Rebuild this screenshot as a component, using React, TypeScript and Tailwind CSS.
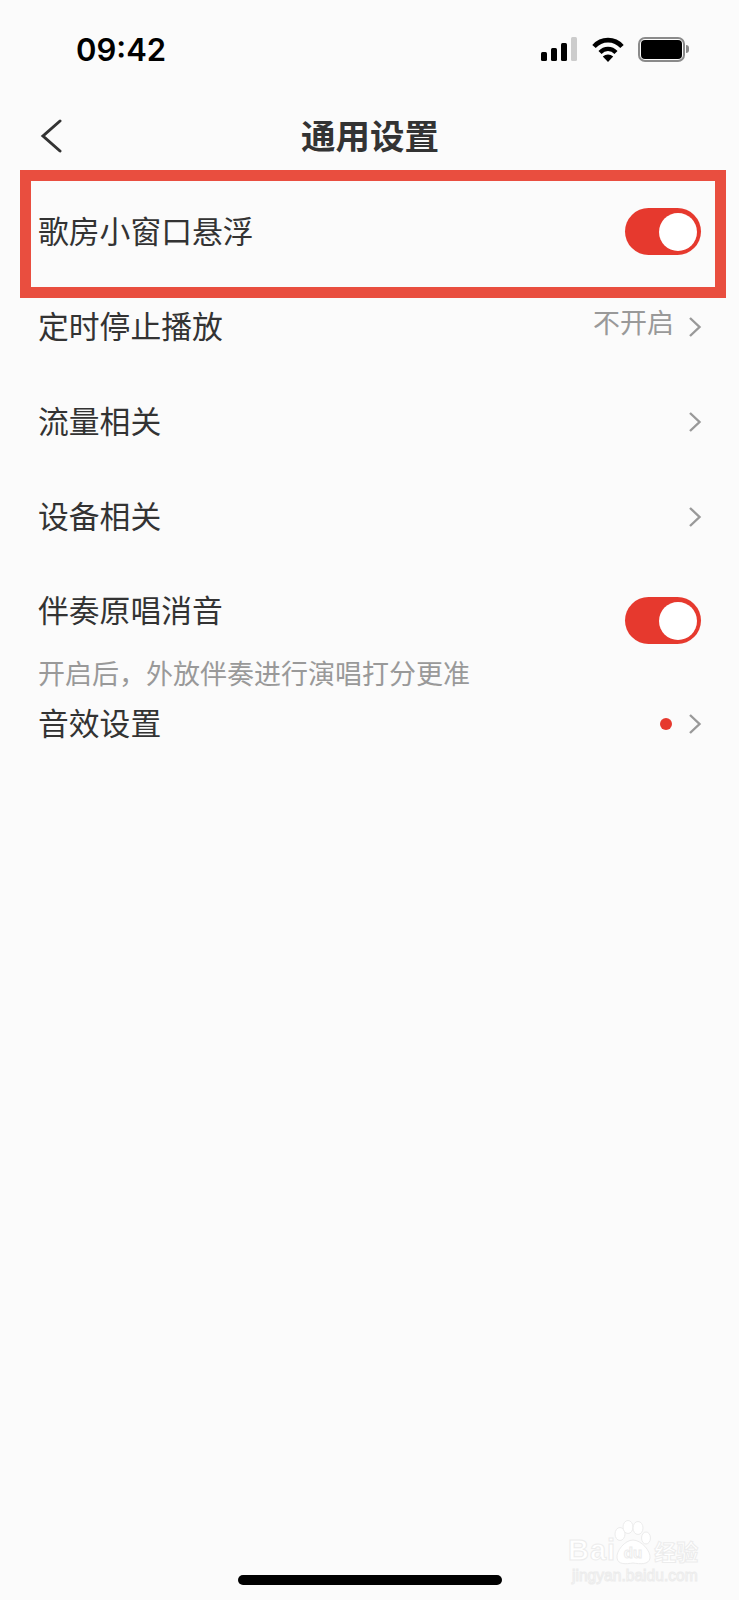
const cjk = "font-['Noto_Sans_CJK_SC','Noto_Sans',sans-serif]";
const labelText = "text-[30.800px] leading-[46px] text-[#333333]";

function Chevron() {
  return (
    <svg width="14" height="22" viewBox="0 0 14 22" fill="none" className="shrink-0">
      <path d="M2 2l9.5 9L2 20" stroke="#999999" strokeWidth="2.4" />
    </svg>
  );
}

function Toggle() {
  return (
    <div className="w-[76px] h-[47px] rounded-full bg-[#e6392e] flex items-center justify-end pr-1">
      <div className="w-[38px] h-[38px] rounded-full bg-white" />
    </div>
  );
}

function StatusIcons() {
  return (
    <div className="flex items-center">
      <svg width="37" height="25" viewBox="0 0 37 25" className="mr-[14px]">
        <rect x="0" y="15" width="6" height="9" rx="1.5" fill="#000" />
        <rect x="10" y="11" width="6" height="13" rx="1.5" fill="#000" />
        <rect x="20" y="6" width="6" height="18" rx="1.5" fill="#000" />
        <rect x="30" y="0" width="6" height="24" rx="1.5" fill="#cccccc" />
      </svg>
      <svg width="32" height="25" viewBox="0 0 32 25" fill="none" className="mr-[14px]">
        <path d="M2 9.5C9.5 1 22.500 1 30 9.500" stroke="#000" strokeWidth="4.600" />
        <path d="M8 15.500C12.500 10.700 19.500 10.700 24 15.500" stroke="#000" strokeWidth="4.200" />
        <path d="M10.800 19.500C13.800 16.700 18.200 16.700 21.200 19.500L16 25z" fill="#000" />
      </svg>
      <div className="w-[47px] h-[25px] rounded-[7px] border-2 border-[#8a8a8a] p-[1px]">
        <div className="w-full h-full rounded-[4px] bg-black" />
      </div>
      <div className="w-[3px] h-[8px] ml-[1px] rounded-r-full bg-[#8a8a8a]" />
    </div>
  );
}

function Row({ label, children }: { label: string; children?: React.ReactNode }) {
  return (
    <div className="h-[95px] flex items-center justify-between pl-[38px] pr-[37px]">
      <span className={`${labelText} -mt-[4px]`}>{label}</span>
      {children}
    </div>
  );
}

function Watermark() {
  const outline = "text-white [-webkit-text-stroke:1px_#ececec]";
  return (
    <div className="absolute left-[568px] top-[1520px] w-[130px] h-[64px] flex flex-col">
      <div className="h-[45px] flex items-end">
        <span className={`shrink-0 font-['Liberation_Sans',sans-serif] font-bold text-[29px] tracking-[1px] leading-[24px] pb-[3px] ${outline}`}>Bai</span>
        <svg width="40" height="45" viewBox="0 0 40 45" fill="#ffffff" stroke="#ececec" strokeWidth="1" className="shrink-0 -ml-[3px]">
          <ellipse cx="7" cy="14" rx="5" ry="6.500" />
          <ellipse cx="15" cy="7" rx="5" ry="6.500" />
          <ellipse cx="25" cy="8" rx="5" ry="6.500" />
          <ellipse cx="33" cy="18" rx="4.500" ry="6" />
          <path d="M20 20C28 20 38 31 37 38C36 45 27 44 20 43C13 44 5 45 4 38C3 31 12 20 20 20z" />
          <text x="20" y="38" textAnchor="middle" fontSize="15" fontWeight="700" fontFamily="Liberation Sans">du</text>
        </svg>
        <span className={`shrink-0 whitespace-nowrap ${cjk} font-bold text-[22px] leading-[24px] pb-[3px] ml-[1px] ${outline}`}>经验</span>
      </div>
      <span className={`font-['Liberation_Sans',sans-serif] text-[15.600px] leading-[18px] mt-[2px] ml-[4px] whitespace-nowrap ${outline}`}>jingyan.baidu.com</span>
    </div>
  );
}

export default function App() {
  return (
    <div className={`relative w-[739px] h-[1600px] overflow-hidden bg-[#fbfbfb] ${cjk}`}>
      <div className="h-[98px] flex items-center justify-between pl-[76px] pr-[50px]">
        <span className="font-['Inter',sans-serif] font-semibold text-[31px] leading-none text-black">09:42</span>
        <StatusIcons />
      </div>

      <div className="h-[78px] flex items-center pl-[40px]">
        <svg width="22" height="34" viewBox="0 0 22 34" fill="none" className="shrink-0 -mt-[2px]">
          <path d="M20 2L3 17l17 15" stroke="#333333" strokeWidth="3" strokeLinecap="round" />
        </svg>
        <h1 className="ml-[239px] -mt-[6px] text-[34.500px] leading-[48px] font-semibold text-[#333333]">通用设置</h1>
      </div>

      <div className="pt-[8px]">
        <Row label="歌房小窗口悬浮">
          <span className="mr-[1px]">
            <Toggle />
          </span>
        </Row>
        <Row label="定时停止播放">
          <div className="flex items-center">
            <span className="text-[27px] leading-[40px] text-[#999999] mr-[14px] -mt-[10px]">不开启</span>
            <Chevron />
          </div>
        </Row>
        <Row label="流量相关">
          <Chevron />
        </Row>
        <Row label="设备相关">
          <Chevron />
        </Row>
        <div className="flex items-start justify-between pl-[38px] pr-[38px] pt-[22px]">
          <div className="flex flex-col">
            <span className={labelText}>伴奏原唱消音</span>
            <span className="mt-[22px] text-[27px] leading-[38px] text-[#999999]">开启后，外放伴奏进行演唱打分更准</span>
          </div>
          <div className="mt-[11px]">
            <Toggle />
          </div>
        </div>
        <div className="flex items-center justify-between pl-[38px] pr-[37px] pt-[11px]">
          <span className={`${labelText} -mt-[4px]`}>音效设置</span>
          <div className="flex items-center">
            <div className="w-[12px] h-[12px] rounded-full bg-[#e6392e] mr-[16px]" />
            <Chevron />
          </div>
        </div>
      </div>

      <div className="absolute left-[20px] top-[170px] w-[706px] h-[128px] border-[11px] border-[#e94e3f] pointer-events-none" />
      <Watermark />
      <div className="absolute left-[238px] top-[1575px] w-[264px] h-[10px] rounded-full bg-black" />
    </div>
  );
}
